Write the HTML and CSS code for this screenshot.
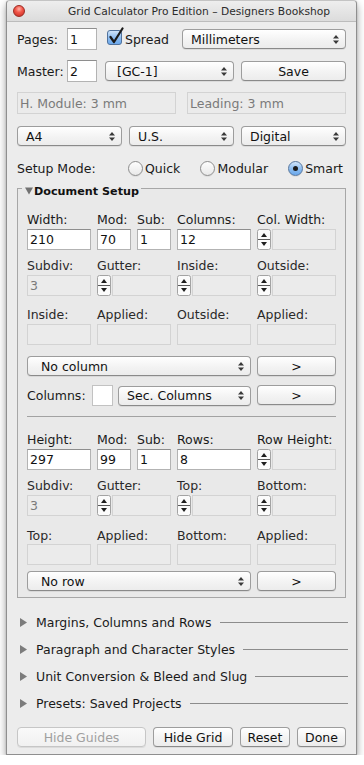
FILE: index.html
```html
<!DOCTYPE html>
<html lang="en">
<head>
<meta charset="utf-8">
<title>Grid Calculator Pro Edition</title>
<link rel="stylesheet" href="styles.css">
</head>
<body>
<div class="window">
  <header class="titlebar">
    <span class="close"></span>
    <span class="title">Grid Calculator Pro Edition – Designers Bookshop</span>
  </header>
  <main class="content">
    <div class="row r1">
      <span class="lbl fixed">Pages:</span>
      <div class="field num">1</div>
      <svg class="check" width="17" height="20" viewBox="0 0 17 20"><defs><linearGradient id="cb" x1="0" y1="0" x2="0" y2="1"><stop offset="0" stop-color="#d4e7fb"/><stop offset="0.5" stop-color="#8fbdf0"/><stop offset="1" stop-color="#6aa8ec"/></linearGradient></defs><rect x="0.5" y="3.5" width="14" height="14" rx="2.5" fill="url(#cb)" stroke="#51729c"/><path d="M3.5 10 L7 15 L15.5 1.5" fill="none" stroke="#1a1a1a" stroke-width="2.2" stroke-linecap="round" stroke-linejoin="round"/></svg>
      <span class="lbl spread">Spread</span>
      <div class="popup grow"><span class="ptext">Millimeters</span><svg class="arr" width="6" height="11" viewBox="0 0 6 11"><path d="M3 1 L6 4.5 H0Z M3 10 L6 6.5 H0Z" fill="#3a3a3a"/></svg></div>
    </div>
    <div class="row r2">
      <span class="lbl fixed">Master:</span>
      <div class="field num">2</div>
      <div class="popup pop-master"><span class="ptext ind">[GC-1]</span><svg class="arr" width="6" height="11" viewBox="0 0 6 11"><path d="M3 1 L6 4.5 H0Z M3 10 L6 6.5 H0Z" fill="#3a3a3a"/></svg></div>
      <div class="button grow save">Save</div>
    </div>
    <div class="row r3">
      <div class="field dis grow">H. Module: 3 mm</div>
      <div class="field dis grow">Leading: 3 mm</div>
    </div>
    <div class="row r4">
      <div class="popup grow"><span class="ptext">A4</span><svg class="arr" width="6" height="11" viewBox="0 0 6 11"><path d="M3 1 L6 4.5 H0Z M3 10 L6 6.5 H0Z" fill="#3a3a3a"/></svg></div>
      <div class="popup grow"><span class="ptext">U.S.</span><svg class="arr" width="6" height="11" viewBox="0 0 6 11"><path d="M3 1 L6 4.5 H0Z M3 10 L6 6.5 H0Z" fill="#3a3a3a"/></svg></div>
      <div class="popup grow"><span class="ptext">Digital</span><svg class="arr" width="6" height="11" viewBox="0 0 6 11"><path d="M3 1 L6 4.5 H0Z M3 10 L6 6.5 H0Z" fill="#3a3a3a"/></svg></div>
    </div>
    <div class="row r5">
      <span class="lbl mode">Setup Mode:</span>
      <div class="radios">
        <span class="radio"><i class="rb"></i>Quick</span>
        <span class="radio"><i class="rb"></i>Modular</span>
        <span class="radio"><i class="rb on"></i>Smart</span>
      </div>
    </div>

    <fieldset class="group">
      <legend><svg class="tri-down" width="9" height="8" viewBox="0 0 9 8"><path d="M0 0.5 H8 L4 7.5Z" fill="#727272"/></svg>Document Setup</legend>

      <div class="fgrid first">
        <span class="lab">Width:</span>
        <span class="lab">Mod:</span>
        <span class="lab">Sub:</span>
        <span class="lab">Columns:</span>
        <span class="lab">Col. Width:</span>
        <div class="field">210</div>
        <div class="field">70</div>
        <div class="field">1</div>
        <div class="field">12</div>
        <div class="sf"><svg class="step" width="14" height="21" viewBox="0 0 14 21"><rect x="0.5" y="0.5" width="13" height="20" rx="2" fill="#fbfbfb" stroke="#a3a3a3"/><line x1="1" y1="10.5" x2="13" y2="10.5" stroke="#5a5a5a"/><path d="M7 4 L10 8 H4Z M7 17 L10 13 H4Z" fill="#1e1e1e"/></svg><div class="field dis"></div></div>
      </div>

      <div class="fgrid g2">
        <span class="lab dim">Subdiv:</span>
        <span class="lab dim span2">Gutter:</span>
        <span class="lab dim">Inside:</span>
        <span class="lab dim">Outside:</span>
        <div class="field dis">3</div>
        <div class="sf span2"><svg class="step" width="14" height="21" viewBox="0 0 14 21"><rect x="0.5" y="0.5" width="13" height="20" rx="2" fill="#fbfbfb" stroke="#a3a3a3"/><line x1="1" y1="10.5" x2="13" y2="10.5" stroke="#5a5a5a"/><path d="M7 4 L10 8 H4Z M7 17 L10 13 H4Z" fill="#1e1e1e"/></svg><div class="field dis"></div></div>
        <div class="sf"><svg class="step" width="14" height="21" viewBox="0 0 14 21"><rect x="0.5" y="0.5" width="13" height="20" rx="2" fill="#fbfbfb" stroke="#a3a3a3"/><line x1="1" y1="10.5" x2="13" y2="10.5" stroke="#5a5a5a"/><path d="M7 4 L10 8 H4Z M7 17 L10 13 H4Z" fill="#1e1e1e"/></svg><div class="field dis"></div></div>
        <div class="sf"><svg class="step" width="14" height="21" viewBox="0 0 14 21"><rect x="0.5" y="0.5" width="13" height="20" rx="2" fill="#fbfbfb" stroke="#a3a3a3"/><line x1="1" y1="10.5" x2="13" y2="10.5" stroke="#5a5a5a"/><path d="M7 4 L10 8 H4Z M7 17 L10 13 H4Z" fill="#1e1e1e"/></svg><div class="field dis"></div></div>
      </div>

      <div class="fgrid g3">
        <span class="lab dim">Inside:</span>
        <span class="lab dim span2">Applied:</span>
        <span class="lab dim">Outside:</span>
        <span class="lab dim">Applied:</span>
        <div class="field dis"></div>
        <div class="field dis span2"></div>
        <div class="field dis"></div>
        <div class="field dis"></div>
      </div>

      <div class="prow p1">
        <div class="popup"><span class="ptext ind2">No column</span><svg class="arr" width="6" height="11" viewBox="0 0 6 11"><path d="M3 1 L6 4.5 H0Z M3 10 L6 6.5 H0Z" fill="#3a3a3a"/></svg></div>
        <div class="button">&gt;</div>
      </div>

      <div class="prow p2">
        <div class="colrow">
          <span class="lab collab">Columns:</span>
          <span class="well"></span>
          <div class="popup grow"><span class="ptext">Sec. Columns</span><svg class="arr" width="6" height="11" viewBox="0 0 6 11"><path d="M3 1 L6 4.5 H0Z M3 10 L6 6.5 H0Z" fill="#3a3a3a"/></svg></div>
        </div>
        <div class="button">&gt;</div>
      </div>

      <div class="sep"></div>

      <div class="fgrid g4">
        <span class="lab">Height:</span>
        <span class="lab">Mod:</span>
        <span class="lab">Sub:</span>
        <span class="lab">Rows:</span>
        <span class="lab">Row Height:</span>
        <div class="field">297</div>
        <div class="field">99</div>
        <div class="field">1</div>
        <div class="field">8</div>
        <div class="sf"><svg class="step" width="14" height="21" viewBox="0 0 14 21"><rect x="0.5" y="0.5" width="13" height="20" rx="2" fill="#fbfbfb" stroke="#a3a3a3"/><line x1="1" y1="10.5" x2="13" y2="10.5" stroke="#5a5a5a"/><path d="M7 4 L10 8 H4Z M7 17 L10 13 H4Z" fill="#1e1e1e"/></svg><div class="field dis"></div></div>
      </div>

      <div class="fgrid g5">
        <span class="lab dim">Subdiv:</span>
        <span class="lab dim span2">Gutter:</span>
        <span class="lab dim">Top:</span>
        <span class="lab dim">Bottom:</span>
        <div class="field dis">3</div>
        <div class="sf span2"><svg class="step" width="14" height="21" viewBox="0 0 14 21"><rect x="0.5" y="0.5" width="13" height="20" rx="2" fill="#fbfbfb" stroke="#a3a3a3"/><line x1="1" y1="10.5" x2="13" y2="10.5" stroke="#5a5a5a"/><path d="M7 4 L10 8 H4Z M7 17 L10 13 H4Z" fill="#1e1e1e"/></svg><div class="field dis"></div></div>
        <div class="sf"><svg class="step" width="14" height="21" viewBox="0 0 14 21"><rect x="0.5" y="0.5" width="13" height="20" rx="2" fill="#fbfbfb" stroke="#a3a3a3"/><line x1="1" y1="10.5" x2="13" y2="10.5" stroke="#5a5a5a"/><path d="M7 4 L10 8 H4Z M7 17 L10 13 H4Z" fill="#1e1e1e"/></svg><div class="field dis"></div></div>
        <div class="sf"><svg class="step" width="14" height="21" viewBox="0 0 14 21"><rect x="0.5" y="0.5" width="13" height="20" rx="2" fill="#fbfbfb" stroke="#a3a3a3"/><line x1="1" y1="10.5" x2="13" y2="10.5" stroke="#5a5a5a"/><path d="M7 4 L10 8 H4Z M7 17 L10 13 H4Z" fill="#1e1e1e"/></svg><div class="field dis"></div></div>
      </div>

      <div class="fgrid g6">
        <span class="lab dim">Top:</span>
        <span class="lab dim span2">Applied:</span>
        <span class="lab dim">Bottom:</span>
        <span class="lab dim">Applied:</span>
        <div class="field dis"></div>
        <div class="field dis span2"></div>
        <div class="field dis"></div>
        <div class="field dis"></div>
      </div>

      <div class="prow p3">
        <div class="popup"><span class="ptext ind2">No row</span><svg class="arr" width="6" height="11" viewBox="0 0 6 11"><path d="M3 1 L6 4.5 H0Z M3 10 L6 6.5 H0Z" fill="#3a3a3a"/></svg></div>
        <div class="button">&gt;</div>
      </div>
    </fieldset>

    <div class="discs">
      <div class="disc"><svg class="tri-right" width="8" height="9" viewBox="0 0 8 9"><path d="M0 0 L7 4.5 L0 9Z" fill="#7c7c7c"/></svg><span class="dtext">Margins, Columns and Rows</span><span class="dline"></span></div>
      <div class="disc"><svg class="tri-right" width="8" height="9" viewBox="0 0 8 9"><path d="M0 0 L7 4.5 L0 9Z" fill="#7c7c7c"/></svg><span class="dtext">Paragraph and Character Styles</span><span class="dline"></span></div>
      <div class="disc"><svg class="tri-right" width="8" height="9" viewBox="0 0 8 9"><path d="M0 0 L7 4.5 L0 9Z" fill="#7c7c7c"/></svg><span class="dtext">Unit Conversion &amp; Bleed and Slug</span><span class="dline"></span></div>
      <div class="disc"><svg class="tri-right" width="8" height="9" viewBox="0 0 8 9"><path d="M0 0 L7 4.5 L0 9Z" fill="#7c7c7c"/></svg><span class="dtext">Presets: Saved Projects</span><span class="dline"></span></div>
    </div>

    <div class="btnrow">
      <div class="button disabled grow">Hide Guides</div>
      <div class="button b-grid">Hide Grid</div>
      <div class="button b-reset">Reset</div>
      <div class="button b-done">Done</div>
    </div>
  </main>
</div>
</body>
</html>
```

FILE: styles.css
```css
* { box-sizing: border-box; }

body {
  margin: 0;
  background: #ffffff;
  font-family: "DejaVu Sans", "Liberation Sans", sans-serif;
  font-size: 12.5px;
  color: #1a1a1a;
}

.window {
  width: 351px;
  margin-left: 6px;
  background: #ececec;
  border: 1px solid #8f8f8f;
  border-top-color: #c4c4c4;
  border-radius: 4px 4px 0 0;
  box-shadow: 0 4px 9px rgba(0, 0, 0, 0.38), 0 0 2px rgba(0, 0, 0, 0.15);
}

.titlebar {
  height: 21px;
  display: flex;
  align-items: center;
  background: linear-gradient(#eeeeee, #dcdcdc);
  border-bottom: 1px solid #bcbcbc;
  border-radius: 4px 4px 0 0;
}

.close {
  width: 12px;
  height: 12px;
  margin-left: 6px;
  border-radius: 50%;
  background: radial-gradient(circle at 50% 30%, #ffb3a8 0, #f2584b 40%, #c5281e 100%);
  border: 1px solid #9b2a22;
  flex: none;
}

.title {
  margin-left: 43px;
  font-size: 10.7px;
  color: #2c2c2c;
  white-space: nowrap;
}

.content {
  display: block;
  padding: 6px 10px 7px 10px;
}

.row {
  display: flex;
  align-items: center;
}

.grow { flex: 1; }

.r1 { height: 22px; }
.r2 { height: 22px; margin-top: 10px; }
.r3 { height: 22px; margin-top: 10px; gap: 11px; }
.r4 { height: 20px; margin-top: 12px; gap: 7px; }
.r5 { height: 18px; margin-top: 13px; }

.lbl { white-space: nowrap; }
.fixed { width: 50px; flex: none; }
.spread { margin-left: 1px; }
.check { flex: none; margin-left: 10px; margin-top: -4px; }

.r1 .popup { margin-left: 13px; }
.pop-master { width: 129px; margin-left: 8px; }
.save { margin-left: 7px; }

.field {
  height: 22px;
  background: #ffffff;
  border: 1px solid #b3b3b3;
  border-top-color: #8e8e8e;
  padding-left: 2px;
  display: flex;
  align-items: center;
  white-space: nowrap;
  color: #111;
}
.num { width: 30px; flex: none; }

.field.dis {
  background: #ebebeb;
  border: 1px solid #d3d3d3;
  color: #7a7a7a;
}

.popup, .button {
  height: 20px;
  border: 1px solid #9d9d9d;
  border-bottom-color: #8a8a8a;
  border-radius: 4px;
  background: linear-gradient(#ffffff, #f3f3f3 55%, #ececec);
  box-shadow: 0 1px 0 rgba(0, 0, 0, 0.07);
  display: flex;
  align-items: center;
  white-space: nowrap;
  color: #111;
}

.popup .ptext { flex: 1; padding-left: 8px; overflow: hidden; }
.popup .ptext.ind { padding-left: 11px; }
.popup .ptext.ind2 { padding-left: 13px; }
.popup .arr { flex: none; margin-right: 6px; }

.button { justify-content: center; }
.button.disabled {
  color: #a0a0a0;
  border-color: #c6c6c6;
  background: linear-gradient(#fafafa, #f1f1f1);
}

.mode { width: 111px; flex: none; }
.radios {
  flex: 1;
  display: flex;
  justify-content: space-between;
  margin-right: 3px;
}
.radio { display: flex; align-items: center; }
.rb {
  width: 15px;
  height: 15px;
  border-radius: 50%;
  margin-right: 2px;
  border: 1px solid #8d8d8d;
  background: linear-gradient(#fdfdfd, #e9e9e9);
  box-shadow: 0 1px 0 rgba(0, 0, 0, 0.06);
  display: flex;
  align-items: center;
  justify-content: center;
}
.rb.on {
  border-color: #56769e;
  background: linear-gradient(#d2e6fb, #8fbef0 50%, #6aa8ec);
}
.rb.on::after {
  content: "";
  width: 5px;
  height: 5px;
  border-radius: 50%;
  background: #1c1c1c;
}

.group {
  margin: 0;
  padding: 0 9px 6px 9px;
  border: 1px solid #a7a7a7;
  background: #e9e9e9;
  min-width: 0;
}
.group legend {
  margin-left: -5px;
  padding: 8px 2px 0 3px;
  font-weight: bold;
  font-size: 11.2px;
  line-height: 14px;
  color: #111;
}
.tri-down { vertical-align: 0; margin-right: 0; }

.fgrid {
  display: grid;
  grid-template-columns: 64px 34px 34px 74px 79px;
  column-gap: 6px;
  row-gap: 2px;
}
.fgrid .field { height: 21px; }
.lab { line-height: 14px; white-space: nowrap; }
.lab.dim { color: #2a2a2a; }
.span2 { grid-column: span 2; }

.first { margin-top: 14px; }
.g2 { margin-top: 9px; }
.g3 { margin-top: 12px; }
.g4 { margin-top: 16px; }
.g5 { margin-top: 9px; }
.g6 { margin-top: 13px; row-gap: 1px; }

.sf { display: flex; height: 21px; }
.sf .step { flex: none; }
.sf .field { flex: 1; margin-left: 1px; }

.prow {
  display: grid;
  grid-template-columns: 1fr 79px;
  column-gap: 6px;
  height: 20px;
}
.p1 { margin-top: 11px; }
.p2 { margin-top: 9px; }
.p3 { margin-top: 6px; }

.colrow { display: flex; align-items: center; }
.collab { width: 65px; flex: none; }
.well {
  width: 21px;
  height: 21px;
  flex: none;
  background: #ffffff;
  border: 1px solid #c2c2c2;
}
.colrow .popup { margin-left: 5px; }

.sep {
  margin-top: 11px;
  height: 0;
  border-top: 1px solid #a2a2a2;
}

.discs { margin-top: 11px; margin-right: -2px; }
.disc {
  display: flex;
  align-items: center;
  height: 27px;
}
.tri-right { flex: none; margin-left: 3px; }
.dtext { margin-left: 8px; white-space: nowrap; }
.dline {
  flex: 1;
  margin-left: 8px;
  border-top: 1px solid #8c8c8c;
}

.btnrow {
  display: flex;
  gap: 7px;
  height: 20px;
  margin-top: 10px;
}
.b-grid { width: 80px; }
.b-reset { width: 50px; }
.b-done { width: 49px; }
```
